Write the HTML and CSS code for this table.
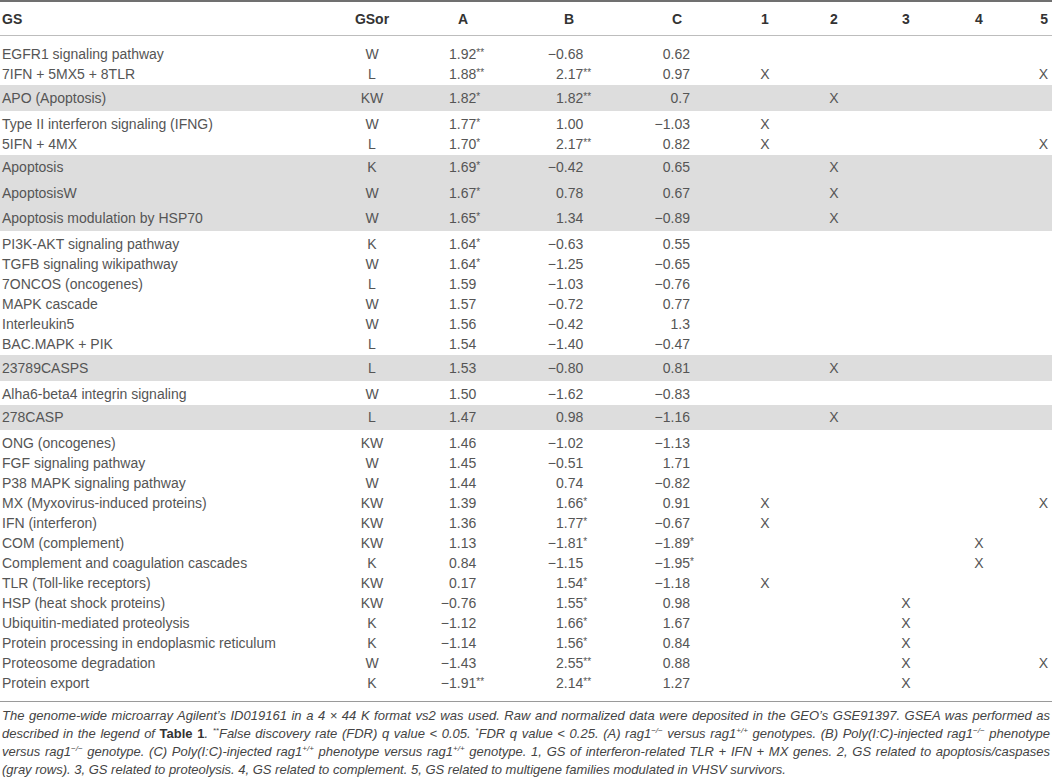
FILE: index.html
```html
<!DOCTYPE html>
<html>
<head>
<meta charset="utf-8">
<link rel="stylesheet" href="styles.css">
</head>
<body>
<div class="table">
  <div class="row head">
    <div class="gs">GS</div><div class="ctr">GSor</div><div class="ctr">A</div><div class="ctr">B</div><div class="ctr">C</div><div class="ctr">1</div><div class="ctr">2</div><div class="ctr">3</div><div class="ctr">4</div><div class="last">5</div>
  </div>
  <div class="body">
    <div class="row"><div class="gs">EGFR1 signaling pathway</div><div class="ctr">W</div><div class="na"><span class="sg"></span>1.92<span class="sig">**</span></div><div class="nb"><span class="sg">−</span>0.68</div><div class="nc">0.62</div><div class="ctr"></div><div class="ctr"></div><div class="ctr"></div><div class="ctr"></div><div class="last"></div></div>
    <div class="row"><div class="gs">7IFN + 5MX5 + 8TLR</div><div class="ctr">L</div><div class="na"><span class="sg"></span>1.88<span class="sig">**</span></div><div class="nb"><span class="sg"></span>2.17<span class="sig">**</span></div><div class="nc">0.97</div><div class="ctr">X</div><div class="ctr"></div><div class="ctr"></div><div class="ctr"></div><div class="last">X</div></div>
    <div class="shade">
      <div class="row"><div class="gs">APO (Apoptosis)</div><div class="ctr">KW</div><div class="na"><span class="sg"></span>1.82<span class="sig">*</span></div><div class="nb"><span class="sg"></span>1.82<span class="sig">**</span></div><div class="nc">0.7</div><div class="ctr"></div><div class="ctr">X</div><div class="ctr"></div><div class="ctr"></div><div class="last"></div></div>
    </div>
    <div class="row"><div class="gs">Type II interferon signaling (IFNG)</div><div class="ctr">W</div><div class="na"><span class="sg"></span>1.77<span class="sig">*</span></div><div class="nb"><span class="sg"></span>1.00</div><div class="nc">−1.03</div><div class="ctr">X</div><div class="ctr"></div><div class="ctr"></div><div class="ctr"></div><div class="last"></div></div>
    <div class="row"><div class="gs">5IFN + 4MX</div><div class="ctr">L</div><div class="na"><span class="sg"></span>1.70<span class="sig">*</span></div><div class="nb"><span class="sg"></span>2.17<span class="sig">**</span></div><div class="nc">0.82</div><div class="ctr">X</div><div class="ctr"></div><div class="ctr"></div><div class="ctr"></div><div class="last">X</div></div>
    <div class="shade">
      <div class="row"><div class="gs">Apoptosis</div><div class="ctr">K</div><div class="na"><span class="sg"></span>1.69<span class="sig">*</span></div><div class="nb"><span class="sg">−</span>0.42</div><div class="nc">0.65</div><div class="ctr"></div><div class="ctr">X</div><div class="ctr"></div><div class="ctr"></div><div class="last"></div></div>
      <div class="row"><div class="gs">ApoptosisW</div><div class="ctr">W</div><div class="na"><span class="sg"></span>1.67<span class="sig">*</span></div><div class="nb"><span class="sg"></span>0.78</div><div class="nc">0.67</div><div class="ctr"></div><div class="ctr">X</div><div class="ctr"></div><div class="ctr"></div><div class="last"></div></div>
      <div class="row"><div class="gs">Apoptosis modulation by HSP70</div><div class="ctr">W</div><div class="na"><span class="sg"></span>1.65<span class="sig">*</span></div><div class="nb"><span class="sg"></span>1.34</div><div class="nc">−0.89</div><div class="ctr"></div><div class="ctr">X</div><div class="ctr"></div><div class="ctr"></div><div class="last"></div></div>
    </div>
    <div class="row"><div class="gs">PI3K-AKT signaling pathway</div><div class="ctr">K</div><div class="na"><span class="sg"></span>1.64<span class="sig">*</span></div><div class="nb"><span class="sg">−</span>0.63</div><div class="nc">0.55</div><div class="ctr"></div><div class="ctr"></div><div class="ctr"></div><div class="ctr"></div><div class="last"></div></div>
    <div class="row"><div class="gs">TGFB signaling wikipathway</div><div class="ctr">W</div><div class="na"><span class="sg"></span>1.64<span class="sig">*</span></div><div class="nb"><span class="sg">−</span>1.25</div><div class="nc">−0.65</div><div class="ctr"></div><div class="ctr"></div><div class="ctr"></div><div class="ctr"></div><div class="last"></div></div>
    <div class="row"><div class="gs">7ONCOS (oncogenes)</div><div class="ctr">L</div><div class="na"><span class="sg"></span>1.59</div><div class="nb"><span class="sg">−</span>1.03</div><div class="nc">−0.76</div><div class="ctr"></div><div class="ctr"></div><div class="ctr"></div><div class="ctr"></div><div class="last"></div></div>
    <div class="row"><div class="gs">MAPK cascade</div><div class="ctr">W</div><div class="na"><span class="sg"></span>1.57</div><div class="nb"><span class="sg">−</span>0.72</div><div class="nc">0.77</div><div class="ctr"></div><div class="ctr"></div><div class="ctr"></div><div class="ctr"></div><div class="last"></div></div>
    <div class="row"><div class="gs">Interleukin5</div><div class="ctr">W</div><div class="na"><span class="sg"></span>1.56</div><div class="nb"><span class="sg">−</span>0.42</div><div class="nc">1.3</div><div class="ctr"></div><div class="ctr"></div><div class="ctr"></div><div class="ctr"></div><div class="last"></div></div>
    <div class="row"><div class="gs">BAC.MAPK + PIK</div><div class="ctr">L</div><div class="na"><span class="sg"></span>1.54</div><div class="nb"><span class="sg">−</span>1.40</div><div class="nc">−0.47</div><div class="ctr"></div><div class="ctr"></div><div class="ctr"></div><div class="ctr"></div><div class="last"></div></div>
    <div class="shade">
      <div class="row"><div class="gs">23789CASPS</div><div class="ctr">L</div><div class="na"><span class="sg"></span>1.53</div><div class="nb"><span class="sg">−</span>0.80</div><div class="nc">0.81</div><div class="ctr"></div><div class="ctr">X</div><div class="ctr"></div><div class="ctr"></div><div class="last"></div></div>
    </div>
    <div class="row"><div class="gs">Alha6-beta4 integrin signaling</div><div class="ctr">W</div><div class="na"><span class="sg"></span>1.50</div><div class="nb"><span class="sg">−</span>1.62</div><div class="nc">−0.83</div><div class="ctr"></div><div class="ctr"></div><div class="ctr"></div><div class="ctr"></div><div class="last"></div></div>
    <div class="shade">
      <div class="row"><div class="gs">278CASP</div><div class="ctr">L</div><div class="na"><span class="sg"></span>1.47</div><div class="nb"><span class="sg"></span>0.98</div><div class="nc">−1.16</div><div class="ctr"></div><div class="ctr">X</div><div class="ctr"></div><div class="ctr"></div><div class="last"></div></div>
    </div>
    <div class="row"><div class="gs">ONG (oncogenes)</div><div class="ctr">KW</div><div class="na"><span class="sg"></span>1.46</div><div class="nb"><span class="sg">−</span>1.02</div><div class="nc">−1.13</div><div class="ctr"></div><div class="ctr"></div><div class="ctr"></div><div class="ctr"></div><div class="last"></div></div>
    <div class="row"><div class="gs">FGF signaling pathway</div><div class="ctr">W</div><div class="na"><span class="sg"></span>1.45</div><div class="nb"><span class="sg">−</span>0.51</div><div class="nc">1.71</div><div class="ctr"></div><div class="ctr"></div><div class="ctr"></div><div class="ctr"></div><div class="last"></div></div>
    <div class="row"><div class="gs">P38 MAPK signaling pathway</div><div class="ctr">W</div><div class="na"><span class="sg"></span>1.44</div><div class="nb"><span class="sg"></span>0.74</div><div class="nc">−0.82</div><div class="ctr"></div><div class="ctr"></div><div class="ctr"></div><div class="ctr"></div><div class="last"></div></div>
    <div class="row"><div class="gs">MX (Myxovirus-induced proteins)</div><div class="ctr">KW</div><div class="na"><span class="sg"></span>1.39</div><div class="nb"><span class="sg"></span>1.66<span class="sig">*</span></div><div class="nc">0.91</div><div class="ctr">X</div><div class="ctr"></div><div class="ctr"></div><div class="ctr"></div><div class="last">X</div></div>
    <div class="row"><div class="gs">IFN (interferon)</div><div class="ctr">KW</div><div class="na"><span class="sg"></span>1.36</div><div class="nb"><span class="sg"></span>1.77<span class="sig">*</span></div><div class="nc">−0.67</div><div class="ctr">X</div><div class="ctr"></div><div class="ctr"></div><div class="ctr"></div><div class="last"></div></div>
    <div class="row"><div class="gs">COM (complement)</div><div class="ctr">KW</div><div class="na"><span class="sg"></span>1.13</div><div class="nb"><span class="sg">−</span>1.81<span class="sig">*</span></div><div class="nc">−1.89<span class="hang">*</span></div><div class="ctr"></div><div class="ctr"></div><div class="ctr"></div><div class="ctr">X</div><div class="last"></div></div>
    <div class="row"><div class="gs">Complement and coagulation cascades</div><div class="ctr">K</div><div class="na"><span class="sg"></span>0.84</div><div class="nb"><span class="sg">−</span>1.15</div><div class="nc">−1.95<span class="hang">*</span></div><div class="ctr"></div><div class="ctr"></div><div class="ctr"></div><div class="ctr">X</div><div class="last"></div></div>
    <div class="row"><div class="gs">TLR (Toll-like receptors)</div><div class="ctr">KW</div><div class="na"><span class="sg"></span>0.17</div><div class="nb"><span class="sg"></span>1.54<span class="sig">*</span></div><div class="nc">−1.18</div><div class="ctr">X</div><div class="ctr"></div><div class="ctr"></div><div class="ctr"></div><div class="last"></div></div>
    <div class="row"><div class="gs">HSP (heat shock proteins)</div><div class="ctr">KW</div><div class="na"><span class="sg">−</span>0.76</div><div class="nb"><span class="sg"></span>1.55<span class="sig">*</span></div><div class="nc">0.98</div><div class="ctr"></div><div class="ctr"></div><div class="ctr">X</div><div class="ctr"></div><div class="last"></div></div>
    <div class="row"><div class="gs">Ubiquitin-mediated proteolysis</div><div class="ctr">K</div><div class="na"><span class="sg">−</span>1.12</div><div class="nb"><span class="sg"></span>1.66<span class="sig">*</span></div><div class="nc">1.67</div><div class="ctr"></div><div class="ctr"></div><div class="ctr">X</div><div class="ctr"></div><div class="last"></div></div>
    <div class="row"><div class="gs">Protein processing in endoplasmic reticulum</div><div class="ctr">K</div><div class="na"><span class="sg">−</span>1.14</div><div class="nb"><span class="sg"></span>1.56<span class="sig">*</span></div><div class="nc">0.84</div><div class="ctr"></div><div class="ctr"></div><div class="ctr">X</div><div class="ctr"></div><div class="last"></div></div>
    <div class="row"><div class="gs">Proteosome degradation</div><div class="ctr">W</div><div class="na"><span class="sg">−</span>1.43</div><div class="nb"><span class="sg"></span>2.55<span class="sig">**</span></div><div class="nc">0.88</div><div class="ctr"></div><div class="ctr"></div><div class="ctr">X</div><div class="ctr"></div><div class="last">X</div></div>
    <div class="row"><div class="gs">Protein export</div><div class="ctr">K</div><div class="na"><span class="sg">−</span>1.91<span class="sig">**</span></div><div class="nb"><span class="sg"></span>2.14<span class="sig">**</span></div><div class="nc">1.27</div><div class="ctr"></div><div class="ctr"></div><div class="ctr">X</div><div class="ctr"></div><div class="last"></div></div>
  </div>
</div>
<div class="note">
  <span class="ln">The genome-wide microarray Agilent’s ID019161 in a 4 × 44 K format vs2 was used. Raw and normalized data were deposited in the GEO’s GSE91397. GSEA was performed as</span>
  <span class="ln">described in the legend of <b>Table 1</b>. <sup>**</sup>False discovery rate (FDR) q value &lt; 0.05. <sup>*</sup>FDR q value &lt; 0.25. (A) rag1<sup>−/−</sup> versus rag1<sup>+/+</sup> genotypes. (B) Poly(I:C)-injected rag1<sup>−/−</sup> phenotype</span>
  <span class="ln">versus rag1<sup>−/−</sup> genotype. (C) Poly(I:C)-injected rag1<sup>+/+</sup> phenotype versus rag1<sup>+/+</sup> genotype. 1, GS of interferon-related TLR + IFN + MX genes. 2, GS related to apoptosis/caspases</span>
  <span class="ln end">(gray rows). 3, GS related to proteolysis. 4, GS related to complement. 5, GS related to multigene families modulated in VHSV survivors.</span>
</div>
</body>
</html>
```

FILE: styles.css
```css
html, body {
  margin: 0;
  padding: 0;
  background: #ffffff;
}
body {
  width: 1052px;
  font-family: "Liberation Sans", Arial, sans-serif;
  color: #555555;
  font-size: 14px;
}
.table {
  border-top: 2px solid #707070;
  border-bottom: 1px solid #9a9a9a;
}
.row {
  display: grid;
  grid-template-columns: 330px 84px 98px 114px 102px 74px 64px 80px 66px 40px;
  align-items: center;
  height: 20px;
  white-space: nowrap;
}
.head {
  height: 33px;
  font-weight: bold;
  color: #333333;
  border-bottom: 1px solid #bdbdbd;
}
.body {
  padding: 8px 0 8px 0;
}
.shade {
  background: #dddddd;
  margin: 1px 0 3px 0;
}
.shade .row {
  height: 25.5px;
}
.gs {
  padding-left: 2px;
}
.ctr {
  text-align: center;
}
.last {
  text-align: right;
  padding-right: 4px;
}
.na {
  padding-left: 26px;
}
.nb {
  padding-left: 35px;
}
.nc {
  text-align: right;
  padding-right: 38px;
}
.sg {
  display: inline-block;
  width: 9px;
  text-align: right;
}
.sig {
  font-size: 10px;
  vertical-align: 3px;
  line-height: 0;
}
.hang {
  display: inline-block;
  width: 0;
  font-size: 10px;
  vertical-align: 3px;
  line-height: 0;
}
.note {
  padding: 5px 2px 0 2px;
  font-style: italic;
  font-size: 13px;
  line-height: 18px;
  color: #444444;
}
.note .ln {
  display: block;
  text-align: justify;
  text-align-last: justify;
  white-space: nowrap;
}
.note .ln.end {
  text-align-last: left;
}
.note b {
  font-style: normal;
  font-weight: bold;
  color: #333333;
}
.note sup {
  font-size: 8px;
  line-height: 0;
  vertical-align: 5px;
}
```
